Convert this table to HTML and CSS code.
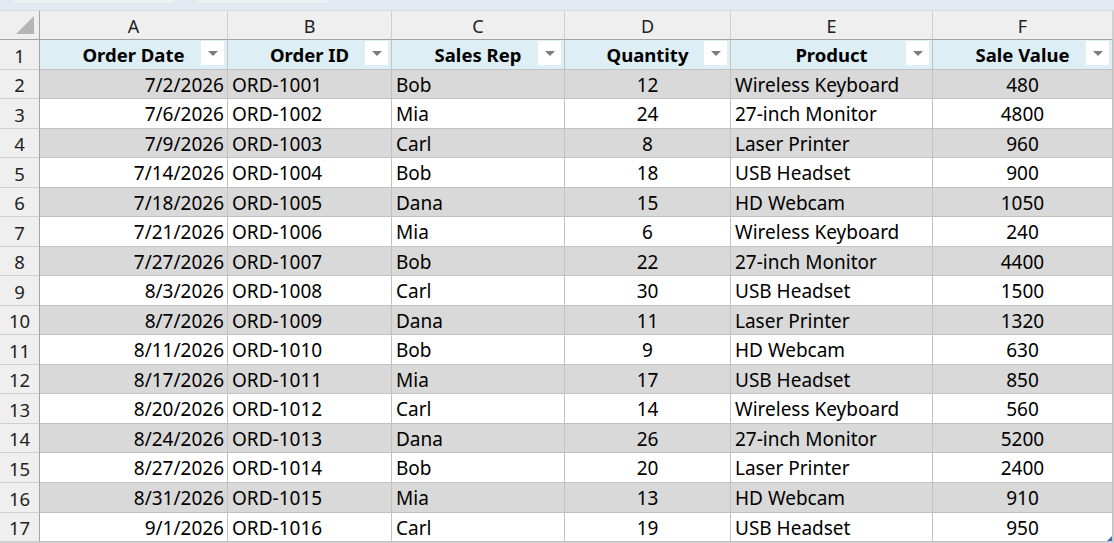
FILE: index.html
```html
<!DOCTYPE html>
<html>
<head>
<meta charset="utf-8">
<link rel="stylesheet" href="styles.css">
</head>
<body>
<div class="app">
  <div class="topstrip"><span class="tab t1"></span><span class="tab t2"></span></div>
  <div class="sheet">
    <div class="corner"><svg width="20" height="20" viewBox="0 0 20 20"><polygon points="19,1 19,19 1,19" fill="#b5b5b5"/></svg></div>
    <div class="ch">A</div><div class="ch">B</div><div class="ch">C</div><div class="ch">D</div><div class="ch">E</div><div class="ch">F</div>

    <div class="rh r30">1</div>
    <div class="hd">Order Date<span class="fb"></span></div>
    <div class="hd">Order ID<span class="fb"></span></div>
    <div class="hd">Sales Rep<span class="fb"></span></div>
    <div class="hd">Quantity<span class="fb"></span></div>
    <div class="hd">Product<span class="fb"></span></div>
    <div class="hd">Sale Value<span class="fb"></span></div>

    <div class="rh">2</div><div class="c g r">7/2/2026</div><div class="c g">ORD-1001</div><div class="c g">Bob</div><div class="c g m">12</div><div class="c g">Wireless Keyboard</div><div class="c g m">480</div>
    <div class="rh">3</div><div class="c r">7/6/2026</div><div class="c">ORD-1002</div><div class="c">Mia</div><div class="c m">24</div><div class="c">27-inch Monitor</div><div class="c m">4800</div>
    <div class="rh">4</div><div class="c g r">7/9/2026</div><div class="c g">ORD-1003</div><div class="c g">Carl</div><div class="c g m">8</div><div class="c g">Laser Printer</div><div class="c g m">960</div>
    <div class="rh">5</div><div class="c r">7/14/2026</div><div class="c">ORD-1004</div><div class="c">Bob</div><div class="c m">18</div><div class="c">USB Headset</div><div class="c m">900</div>
    <div class="rh">6</div><div class="c g r">7/18/2026</div><div class="c g">ORD-1005</div><div class="c g">Dana</div><div class="c g m">15</div><div class="c g">HD Webcam</div><div class="c g m">1050</div>
    <div class="rh">7</div><div class="c r">7/21/2026</div><div class="c">ORD-1006</div><div class="c">Mia</div><div class="c m">6</div><div class="c">Wireless Keyboard</div><div class="c m">240</div>
    <div class="rh">8</div><div class="c g r">7/27/2026</div><div class="c g">ORD-1007</div><div class="c g">Bob</div><div class="c g m">22</div><div class="c g">27-inch Monitor</div><div class="c g m">4400</div>
    <div class="rh">9</div><div class="c r">8/3/2026</div><div class="c">ORD-1008</div><div class="c">Carl</div><div class="c m">30</div><div class="c">USB Headset</div><div class="c m">1500</div>
    <div class="rh">10</div><div class="c g r">8/7/2026</div><div class="c g">ORD-1009</div><div class="c g">Dana</div><div class="c g m">11</div><div class="c g">Laser Printer</div><div class="c g m">1320</div>
    <div class="rh">11</div><div class="c r">8/11/2026</div><div class="c">ORD-1010</div><div class="c">Bob</div><div class="c m">9</div><div class="c">HD Webcam</div><div class="c m">630</div>
    <div class="rh">12</div><div class="c g r">8/17/2026</div><div class="c g">ORD-1011</div><div class="c g">Mia</div><div class="c g m">17</div><div class="c g">USB Headset</div><div class="c g m">850</div>
    <div class="rh">13</div><div class="c r">8/20/2026</div><div class="c">ORD-1012</div><div class="c">Carl</div><div class="c m">14</div><div class="c">Wireless Keyboard</div><div class="c m">560</div>
    <div class="rh">14</div><div class="c g r">8/24/2026</div><div class="c g">ORD-1013</div><div class="c g">Dana</div><div class="c g m">26</div><div class="c g">27-inch Monitor</div><div class="c g m">5200</div>
    <div class="rh">15</div><div class="c r">8/27/2026</div><div class="c">ORD-1014</div><div class="c">Bob</div><div class="c m">20</div><div class="c">Laser Printer</div><div class="c m">2400</div>
    <div class="rh">16</div><div class="c g r">8/31/2026</div><div class="c g">ORD-1015</div><div class="c g">Mia</div><div class="c g m">13</div><div class="c g">HD Webcam</div><div class="c g m">910</div>
    <div class="rh">17</div><div class="c r">9/1/2026</div><div class="c">ORD-1016</div><div class="c">Carl</div><div class="c m">19</div><div class="c">USB Headset</div><div class="c m last">950<span class="handle"></span></div>
  </div>
</div>
</body>
</html>
```
FILE: styles.css
```css
* { box-sizing: border-box; }
html, body { margin: 0; padding: 0; background: #d4d4d4; }
body { width: 1114px; height: 543px; overflow: hidden; font-family: "Noto Sans", "Open Sans", sans-serif; color: #000; }
.app { width: 1114px; height: 543px; background: #d0d0d0; }
.topstrip { height: 11px; background: #e3e9f1; border-bottom: 1px solid #d6dbe2; position: relative; display: flex; gap: 24px; padding-left: 14px; }
.tab { display: block; height: 3px; background: #edf1f6; }
.t1 { width: 160px; }
.t2 { width: 130px; }
.sheet {
  display: grid;
  grid-template-columns: 40px 188px 164px 173px 166px 202px 180px;
  grid-template-rows: 29px 30px 29px 30px 29px 30px 29px 30px 29px 30px 29px 30px 29px 30px 29px 30px 30px 29px;
  background: #fff;
  width: 1113px;
}
.corner { background: #efefef; border-right: 1px solid #a3a3a3; border-bottom: 1px solid #a3a3a3; display: flex; align-items: flex-end; justify-content: flex-end; padding: 0 4px 4px 0; }
.ch { background: #efefef; border-right: 1px solid #cfcfcf; border-bottom: 1px solid #a3a3a3; display: flex; align-items: center; justify-content: center; font-size: 18px; color: #222; padding-top: 1px; }
.rh { background: #efefef; border-right: 1px solid #a3a3a3; border-bottom: 1px solid #cfcfcf; display: flex; align-items: center; justify-content: center; font-size: 18.5px; color: #222; padding-top: 1px; }
.hd { position: relative; background: #ddeef5; border-right: 1px solid #c2c2c2; border-bottom: 1px solid #c2c2c2; display: flex; align-items: center; justify-content: center; font-weight: 700; font-size: 18.5px; }
.fb { position: absolute; right: 3px; top: 1px; width: 23px; height: 24px; background: #fff; }
.fb::after { content: ""; position: absolute; left: 7px; top: 10px; border-left: 5px solid transparent; border-right: 5px solid transparent; border-top: 5px solid #7b7b7b; }
.c { background: #fff; border-right: 1px solid #c2c2c2; border-bottom: 1px solid #c2c2c2; display: flex; align-items: center; padding: 1px 4px 0; font-size: 19px; white-space: nowrap; overflow: hidden; }
.c.g { background: #d9d9d9; }
.c.r { justify-content: flex-end; padding-right: 3px; }
.c.m { justify-content: center; }
.last { position: relative; overflow: visible; }
.handle { position: absolute; right: 0; bottom: 0; width: 5px; height: 5px; background: #3f6fa8; clip-path: polygon(100% 0, 100% 100%, 0 100%); }
```
